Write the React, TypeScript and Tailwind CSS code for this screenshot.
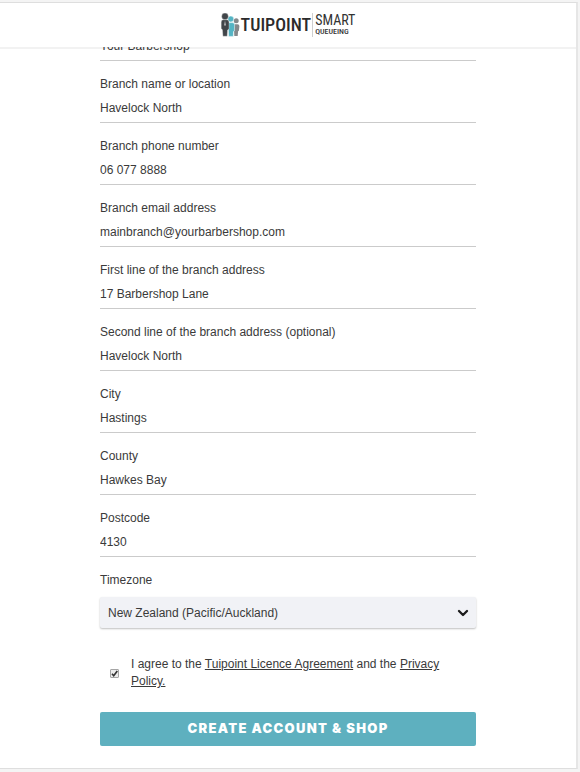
import { ChevronDown } from "lucide-react";

interface FieldProps {
  id: string;
  label: string;
  value: string;
  type?: string;
}

const fields: FieldProps[] = [
  { id: "business", label: "Business name", value: "Your Barbershop" },
  { id: "branch", label: "Branch name or location", value: "Havelock North" },
  { id: "phone", label: "Branch phone number", value: "06 077 8888", type: "tel" },
  {
    id: "email",
    label: "Branch email address",
    value: "mainbranch@yourbarbershop.com",
    type: "email",
  },
  { id: "line1", label: "First line of the branch address", value: "17 Barbershop Lane" },
  {
    id: "line2",
    label: "Second line of the branch address (optional)",
    value: "Havelock North",
  },
  { id: "city", label: "City", value: "Hastings" },
  { id: "county", label: "County", value: "Hawkes Bay" },
  { id: "postcode", label: "Postcode", value: "4130" },
];

const Field: React.FC<FieldProps> = ({ id, label, value, type = "text" }) => (
  <div className="flex flex-col">
    <label htmlFor={id} className="leading-5">
      {label}
    </label>
    <input
      id={id}
      type={type}
      defaultValue={value}
      className="h-[29px] w-full border-b border-[#cbcbcb] bg-transparent focus:outline-none"
    />
  </div>
);

const Logo: React.FC = () => (
  <div className="flex items-center">
    {/* Three people standing in a queue */}
    <svg viewBox="0 0 19 24" className="h-6 w-[19px]" aria-hidden="true">
      <g fill="#85888b">
        <circle cx="15.2" cy="7.8" r="2.5" />
        <path d="M12.8 11.2h3.6q2.1 0 2 2l-.5 4.6-.8.4-.4 4.8h-3.4z" />
      </g>
      <g fill="#54b4c4" stroke="#fff" strokeWidth=".5">
        <circle cx="9.8" cy="6" r="3" />
        <path d="M7 9.6h4.2q2.5 0 2.4 2.3l-.2 6-.9.7-.2 4.8H7.7z" />
      </g>
      <g fill="#414549" stroke="#fff" strokeWidth=".3">
        <circle cx="4" cy="3.4" r="3.3" />
        <path d="M2.2 6.8h3.6q2.2 0 2.2 2.2v7l-1.4 1-.4 6.2H1.9l-.5-6.4L.2 15.6V9q0-2.2 2-2.2z" />
      </g>
      <path d="M4 7.5l.8 4.5-.8 1-.8-1z" fill="#c8cacc" />
    </svg>
    <span className="ml-px font-['Roboto_Condensed','Roboto',sans-serif] text-[18px] leading-6 font-medium text-[#2b2b2b]">
      TUIPOINT
    </span>
    <span className="ml-px flex h-6 flex-col justify-center border-l border-[#cfcfcf] pl-[2px] font-['Roboto_Condensed','Roboto',sans-serif] text-[#333]">
      <span className="text-[14px] leading-[14px]">SMART</span>
      <span className="text-[8px] leading-[10px] font-medium">QUEUEING</span>
    </span>
  </div>
);

export default function App() {
  return (
    <div className="min-h-screen bg-[#f4f4f4] pt-[2px] pr-[2px] font-['Liberation_Sans',sans-serif] text-[12px] text-[#3a3a3a]">
      <div className="overflow-hidden border-t border-r-2 border-b border-[#dedede] border-r-[#e6e6e6] bg-white pb-[22px]">
        <header className="relative z-10 flex h-[46px] items-center justify-center border-b-2 border-black/5 bg-white bg-clip-padding">
          <Logo />
        </header>

        <main className="px-6">
          <form className="mx-auto -mt-[37px] flex max-w-[376px] flex-col">
            <div className="flex flex-col gap-[13px]">
              {fields.map((field) => (
                <Field key={field.id} {...field} />
              ))}
              <div className="flex flex-col gap-[7px]">
                <label htmlFor="timezone" className="leading-5">
                  Timezone
                </label>
                <div className="relative">
                  <select
                    id="timezone"
                    className="h-[31px] w-full appearance-none rounded-[2px] bg-[#f1f2f6] px-2 shadow-[0_1px_2px_rgba(0,0,0,0.25)] focus:outline-none"
                  >
                    <option>New Zealand (Pacific/Auckland)</option>
                  </select>
                  <ChevronDown
                    className="pointer-events-none absolute top-2 right-[5px] h-4 w-4 text-[#1c1c1c]"
                    strokeWidth={3.5}
                  />
                </div>
              </div>
            </div>

            <div className="mt-7 flex items-center gap-3 pr-5 pl-[10px]">
              <span className="relative h-[9px] w-[9px] shrink-0">
                <input
                  id="agree"
                  type="checkbox"
                  defaultChecked
                  className="peer block h-[9px] w-[9px] appearance-none rounded-[1px] border border-[#a5a5a5] bg-[#ececec]"
                />
                <svg
                  viewBox="0 0 9 9"
                  className="pointer-events-none absolute inset-0 hidden h-[9px] w-[9px] peer-checked:block"
                  aria-hidden="true"
                >
                  <path d="M2 4.8l1.7 1.9L7.3 2" fill="none" stroke="#333" strokeWidth="1.7" />
                </svg>
              </span>
              <label htmlFor="agree" className="leading-[17px]">
                I agree to the{" "}
                <a href="#licence" className="underline">
                  Tuipoint Licence Agreement
                </a>{" "}
                and the{" "}
                <a href="#privacy" className="underline">
                  Privacy Policy.
                </a>
              </label>
            </div>

            <button
              type="submit"
              className="mt-[22px] h-[34px] rounded-[2px] bg-[#5eb0bf] font-['Inter',sans-serif] text-[13px] font-black tracking-widest text-white"
            >
              CREATE ACCOUNT &amp; SHOP
            </button>
          </form>
        </main>
      </div>
    </div>
  );
}
